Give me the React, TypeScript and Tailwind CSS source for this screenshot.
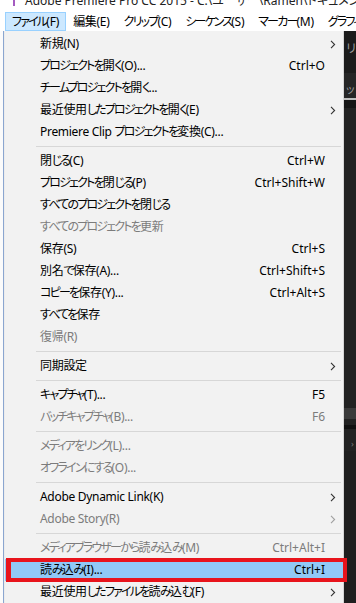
import React from "react";

type Item =
  | { sep: true }
  | { sep?: false; l: string; s?: string; arrow?: boolean; d?: boolean; hl?: boolean };

const items: Item[] = [
  { l: "新規(N)", arrow: true },
  { l: "プロジェクトを開く(O)...", s: "Ctrl+O" },
  { l: "チームプロジェクトを開く..." },
  { l: "最近使用したプロジェクトを開く(E)", arrow: true },
  { l: "Premiere Clip プロジェクトを変換(C)..." },
  { sep: true },
  { l: "閉じる(C)", s: "Ctrl+W" },
  { l: "プロジェクトを閉じる(P)", s: "Ctrl+Shift+W" },
  { l: "すべてのプロジェクトを閉じる" },
  { l: "すべてのプロジェクトを更新", d: true },
  { l: "保存(S)", s: "Ctrl+S" },
  { l: "別名で保存(A)...", s: "Ctrl+Shift+S" },
  { l: "コピーを保存(Y)...", s: "Ctrl+Alt+S" },
  { l: "すべてを保存" },
  { l: "復帰(R)", d: true },
  { sep: true },
  { l: "同期設定", arrow: true },
  { sep: true },
  { l: "キャプチャ(T)...", s: "F5" },
  { l: "バッチキャプチャ(B)...", s: "F6", d: true },
  { sep: true },
  { l: "メディアをリンク(L)...", d: true },
  { l: "オフラインにする(O)...", d: true },
  { sep: true },
  { l: "Adobe Dynamic Link(K)", arrow: true },
  { l: "Adobe Story(R)", arrow: true, d: true },
  { sep: true },
  { l: "メディアブラウザーから読み込み(M)", s: "Ctrl+Alt+I", d: true },
  { l: "読み込み(I)...", s: "Ctrl+I", hl: true },
  { l: "最近使用したファイルを読み込む(F)", arrow: true },
];

const KANA = /([\u3040-\u30ff]+)/;

function JText({ t }: { t: string }) {
  const parts = t.split(KANA).filter((p) => p.length > 0);
  return (
    <>
      {parts.map((p, i) =>
        KANA.test(p) ? (
          <span key={i} className="tracking-[-1.8px]">
            {p}
          </span>
        ) : (
          <span key={i} className="tracking-[-0.3px]">
            {p}
          </span>
        )
      )}
    </>
  );
}

function Chevron({ disabled }: { disabled?: boolean }) {
  return (
    <svg width="6" height="9" viewBox="0 0 6 9" className="block">
      <path
        d="M1 0.8 L4.6 4.5 L1 8.2"
        fill="none"
        stroke={disabled ? "#a0a0a0" : "#333333"}
        strokeWidth="1.1"
      />
    </svg>
  );
}

const menus = ["編集(E)", "クリップ(C)", "シーケンス(S)", "マーカー(M)", "グラフィック(G)"];

export default function App() {
  return (
    <div
      className="relative w-[356px] h-[603px] overflow-hidden bg-white text-[12px] text-black [font-feature-settings:'palt']"
      style={{ fontFamily: '"Noto Sans", "Noto Sans CJK JP", sans-serif' }}
    >
      {/* title bar */}
      <div className="h-[12px] flex overflow-hidden bg-white">
        <div className="ml-[13px] w-[12px] h-[6px] bg-[#2d0038] border border-t-0 border-[#a45bc0]" />
        <div className="ml-[10px] -mt-[8px] whitespace-nowrap text-[12px] text-[#222]">
          Adobe Premiere Pro CC 2015 - C:\ユーザー\Ramen\ドキュメント\グラフィック
        </div>
      </div>

      {/* menu bar */}
      <div className="h-[19px] flex items-stretch bg-white whitespace-nowrap leading-none">
        <div className="ml-[5px] px-[6px] flex items-center bg-[#cce8ff] border border-[#99d1ff]">
          <JText t="ファイル(F)" />
        </div>
        {menus.map((m) => (
          <div key={m} className="px-[7px] flex items-center">
            <JText t={m} />
          </div>
        ))}
      </div>

      {/* body */}
      <div className="flex h-[572px]">
        <div className="w-[3px] bg-[#fbfbfb]" />
        <div className="w-[1px] bg-[#8ba6d0]" />
        <div className="w-[1px] bg-[#ececec]" />

        {/* dropdown */}
        <div className="w-[339px] bg-[#f2f2f2] border-r border-[#d6d6d6] pt-[2px] flex flex-col">
          {items.map((it, i) =>
            it.sep ? (
              <div key={i} className="h-[7px] flex items-center pl-[31px] pr-[2px]">
                <div className="h-[1px] w-full bg-[#d7d7d7]" />
              </div>
            ) : (
              <div
                key={i}
                className={
                  "h-[22px] shrink-0 flex items-center whitespace-nowrap leading-none " +
                  (it.hl ? "bg-[#91c9f7] " : "") +
                  (it.d ? "text-[#7c7c7c]" : "text-black")
                }
              >
                <div className="pl-[35px] flex-1">
                  <JText t={it.l} />
                </div>
                {it.s && <div>{it.s}</div>}
                <div className="w-[18px] flex items-center pl-[5px]">
                  {it.arrow && <Chevron disabled={it.d} />}
                </div>
              </div>
            )
          )}
        </div>

        {/* app behind */}
        <div className="flex-1 flex flex-col bg-[#202020] overflow-hidden">
          <div className="h-[42px] bg-[#1c1c1c] pl-[2px] pt-[12px] text-[#9a9a9a] leading-none">リ</div>
          <div className="h-[25px] bg-[#262626] pl-[2px] pt-[10px] text-[#9a9a9a] leading-none text-[11px]">ッ</div>
          <div className="h-[2px] bg-[#bdbdbd]" />
          <div className="h-[8px] bg-[#161616]" />
          <div className="h-[300px] bg-[#222222]" />
          <div className="h-[11px] bg-[#3a3a3a]" />
          <div className="h-[6px] bg-[#222222]" />
          <div className="h-[4px] bg-[#111111]" />
          <div className="h-[22px] bg-[#222222] pl-[7px] pt-[10px] text-[#777] leading-none text-[9px]">›</div>
          <div className="flex-1 bg-[#1f1f1f]" />
        </div>
      </div>

      {/* red annotation frame */}
      <div className="absolute left-[6px] top-[558px] w-[341px] h-[24px] border-[4px] border-l-[5px] border-[#e8141c]" />
    </div>
  );
}
